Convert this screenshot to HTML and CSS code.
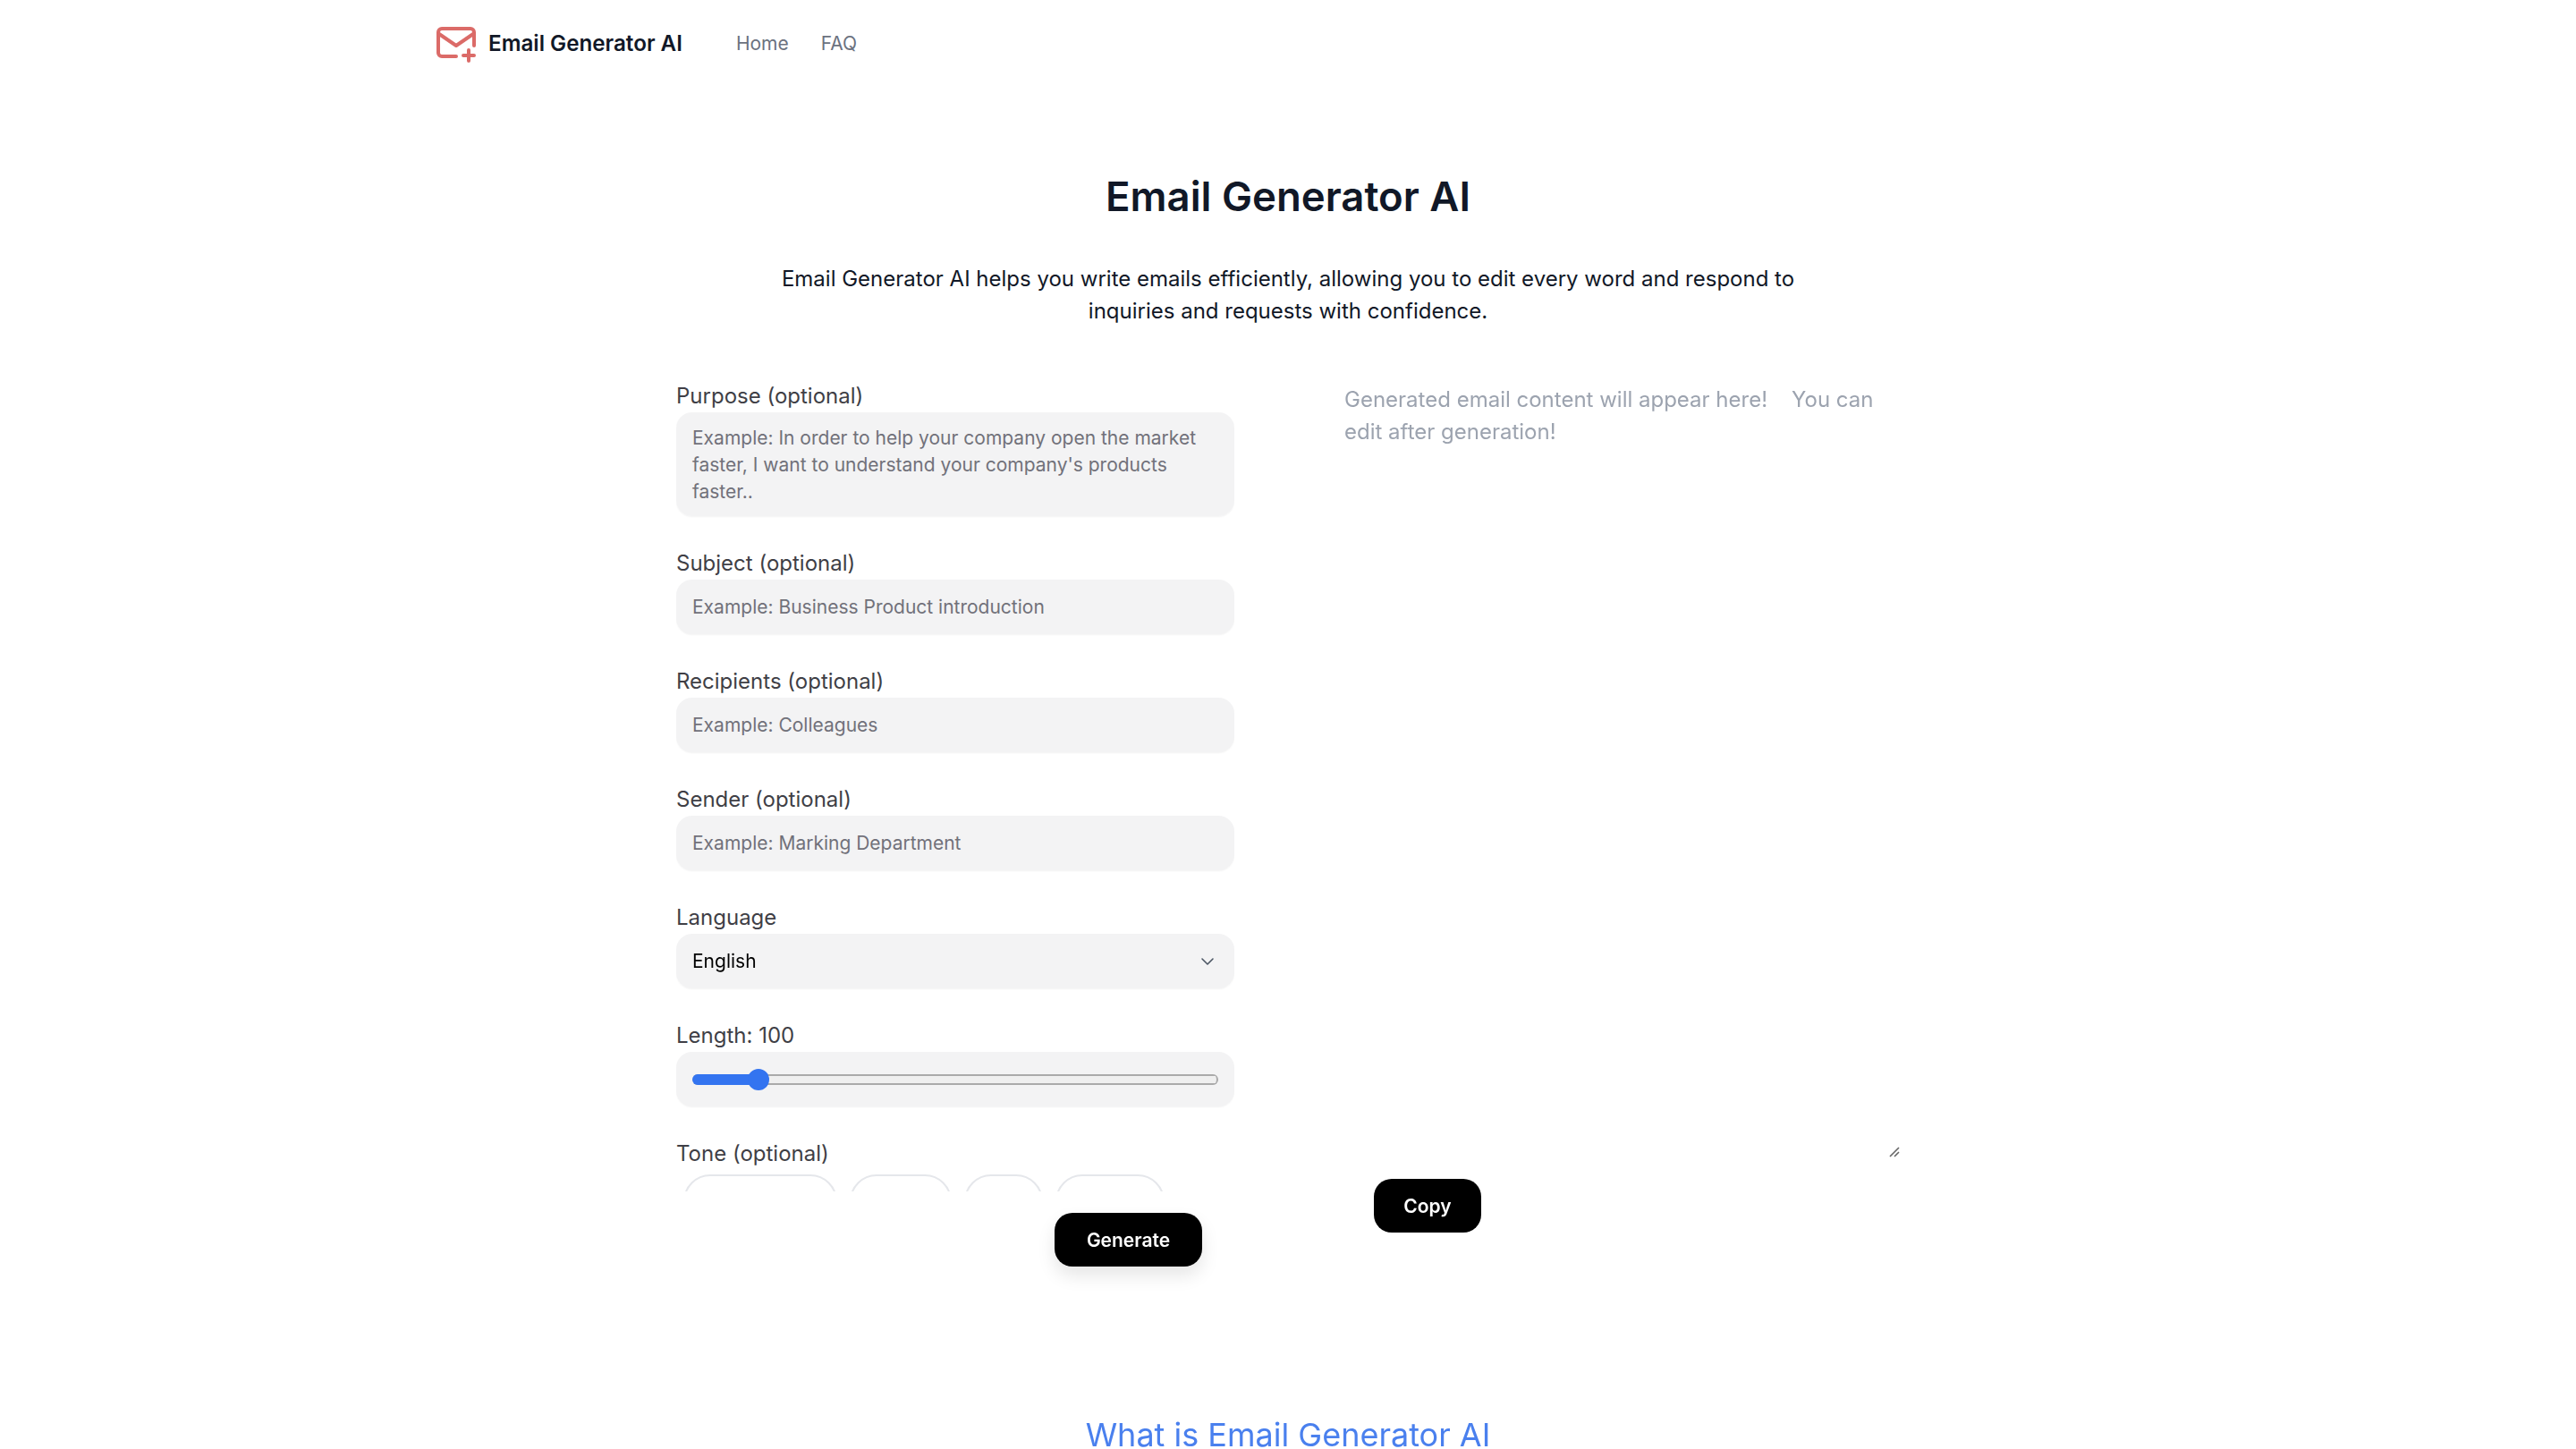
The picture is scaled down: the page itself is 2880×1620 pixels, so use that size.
FILE: index.html
```html
<!DOCTYPE html>
<html lang="en">
<head>
    <meta charset="UTF-8">
    <meta name="viewport" content="width=device-width, initial-scale=1.0">
    <title>Email Generator AI</title>
    <link rel="stylesheet" href="styles.css">
</head>
<body>
    <header class="site-header">
        <a class="logo" href="#">
            <svg class="logo-icon" viewBox="0 0 44 40" fill="none" stroke="#db6b68" stroke-width="4" stroke-linecap="round" stroke-linejoin="round">
                <path d="M22 33H6a4 4 0 0 1-4-4V6a4 4 0 0 1 4-4h32a4 4 0 0 1 4 4v15"/>
                <path d="M3 8l19 13L41 8"/>
                <path d="M36 26v12M30 32h12"/>
            </svg>
            <span>Email Generator AI</span>
        </a>
        <nav class="site-nav">
            <a href="#">Home</a>
            <a href="#">FAQ</a>
        </nav>
    </header>

    <main>
        <h1>Email Generator AI</h1>
        <p class="intro">Email Generator AI helps you write emails efficiently, allowing you to edit every word and respond to inquiries and requests with confidence.</p>

        <div class="tool">
            <div class="tool-left">
                <form class="email-form">
                    <label class="field">
                        <span>Purpose (optional)</span>
                        <textarea class="control control-area" rows="3" placeholder="Example: In order to help your company open the market faster, I want to understand your company's products faster.."></textarea>
                    </label>
                    <label class="field">
                        <span>Subject (optional)</span>
                        <input class="control" type="text" placeholder="Example: Business Product introduction">
                    </label>
                    <label class="field">
                        <span>Recipients (optional)</span>
                        <input class="control" type="text" placeholder="Example: Colleagues">
                    </label>
                    <label class="field">
                        <span>Sender (optional)</span>
                        <input class="control" type="text" placeholder="Example: Marking Department">
                    </label>
                    <label class="field">
                        <span>Language</span>
                        <div class="select-wrap">
                            <select class="control">
                                <option>English</option>
                            </select>
                            <svg class="select-arrow" viewBox="0 0 16 10" fill="none" stroke="#4b5563" stroke-width="1.6" stroke-linecap="round" stroke-linejoin="round">
                                <path d="M2 2l6 6 6-6"/>
                            </svg>
                        </div>
                    </label>
                    <label class="field">
                        <span>Length: 100</span>
                        <div class="control range-wrap">
                            <input class="range" type="range" min="0" max="900" value="100">
                        </div>
                    </label>
                    <div class="field">
                        <span>Tone (optional)</span>
                        <div class="tone-list">
                            <button type="button" class="tone tone-1"></button>
                            <button type="button" class="tone tone-2"></button>
                            <button type="button" class="tone tone-3"></button>
                            <button type="button" class="tone tone-4"></button>
                        </div>
                    </div>
                </form>
                <button type="button" class="btn btn-generate">Generate</button>
            </div>
            <div class="tool-right">
                <div class="output-wrap">
                    <textarea class="output" placeholder="Generated email content will appear here!    You can edit after generation!"></textarea>
                    <svg class="grip" viewBox="0 0 12 12" fill="none" stroke="#666" stroke-width="1.6">
                        <path d="M1 11L11 1M6 11l5-5"/>
                    </svg>
                </div>
                <button type="button" class="btn btn-copy">Copy</button>
            </div>
        </div>

        <h2>What is Email Generator AI</h2>
    </main>
</body>
</html>
```

FILE: styles.css
```css
* {
    box-sizing: border-box;
}
html, body {
    height: 100%;
    overflow: hidden;
}
body {
    margin: 0;
    font-family: Inter, "Noto Sans", sans-serif;
    background-color: #fff;
    color: #111827;
}
a {
    text-decoration: none;
    color: inherit;
}
.site-header {
    display: flex;
    align-items: center;
    width: 1904px;
    height: 96px;
    margin: 0 auto;
}
.logo {
    display: flex;
    align-items: center;
    gap: 14px;
    font-size: 24.2px;
    font-weight: 600;
    color: #111827;
}
.logo-icon {
    width: 44px;
    height: 40px;
    margin-top: 4px;
}
.site-nav {
    display: flex;
    gap: 36px;
    margin-left: 60px;
    font-size: 21px;
    color: #6b7280;
}
h1 {
    margin: 96px 0 0;
    font-size: 45.5px;
    line-height: 56px;
    font-weight: 600;
    text-align: center;
    color: #111827;
}
.intro {
    width: 1160px;
    margin: 46px auto 0;
    font-size: 24px;
    line-height: 36px;
    text-align: center;
    color: #111827;
}
.tool {
    display: flex;
    width: 1368px;
    margin: 59px auto 0;
}
.tool-left {
    width: 729px;
}
.email-form {
    display: flex;
    flex-direction: column;
    gap: 35px;
    width: 624px;
    height: 907px;
    overflow: hidden;
}
.field {
    display: flex;
    flex-direction: column;
    font-size: 24px;
    line-height: 36px;
    color: #3f3f46;
}
.control {
    display: block;
    width: 100%;
    height: 61px;
    padding: 0 18px;
    border: 0;
    border-radius: 18px;
    outline: 0;
    background-color: #f3f3f4;
    box-shadow: 0 1px 2px rgba(0, 0, 0, 0.05);
    font-family: inherit;
    font-size: 21px;
    color: #000;
}
.control::placeholder {
    color: #71717a;
    opacity: 1;
}
.control-area {
    height: 116px;
    padding: 14px 18px;
    line-height: 30px;
    resize: none;
}
.select-wrap {
    position: relative;
}
.select-wrap select {
    appearance: none;
}
.select-arrow {
    position: absolute;
    top: 26px;
    right: 22px;
    width: 16px;
    height: 10px;
}
.range-wrap {
    display: flex;
    align-items: center;
}
.range {
    width: 100%;
    height: 32px;
    margin: 0;
    appearance: none;
    background: transparent;
}
.range::-webkit-slider-runnable-track {
    height: 12px;
    border-right: 2px solid #aaa;
    border-radius: 6px;
    background:
        linear-gradient(#3374f0, #3374f0) 0 0 / 12.8% 100% no-repeat,
        linear-gradient(to bottom, #aaa 2px, #efefef 2px, #efefef 10px, #aaa 10px);
}
.range::-webkit-slider-thumb {
    appearance: none;
    width: 24px;
    height: 24px;
    margin-top: -6px;
    border-radius: 50%;
    background-color: #3374f0;
}
.tone-list {
    display: flex;
    gap: 14px;
    margin-top: 5px;
    padding-left: 8px;
}
.tone {
    height: 60px;
    padding: 0;
    border: 2px solid #e5e7eb;
    border-radius: 32px;
    background: #fff;
}
.tone-1 {
    width: 172px;
}
.tone-2 {
    width: 114px;
}
.tone-3 {
    width: 88px;
}
.tone-4 {
    width: 122px;
}
.btn {
    display: block;
    border: 0;
    border-radius: 20px;
    background-color: #000;
    color: #fff;
    font-family: inherit;
    font-size: 21px;
    font-weight: 600;
    height: 60px;
}
.btn-generate {
    width: 165px;
    margin: 24px 0 0 423px;
    box-shadow: 0 10px 20px rgba(0, 0, 0, 0.1);
}
.tool-right {
    width: 639px;
}
.output-wrap {
    position: relative;
}
.output {
    display: block;
    width: 100%;
    height: 870px;
    padding: 4px 18px;
    border: 0;
    outline: 0;
    resize: none;
    font-family: inherit;
    font-size: 24px;
    line-height: 36px;
    color: #111827;
}
.output::placeholder {
    color: #9ca3af;
}
.grip {
    position: absolute;
    right: 0;
    bottom: 1px;
    width: 12px;
    height: 12px;
}
.btn-copy {
    width: 120px;
    margin: 23px 0 0 51px;
}
h2 {
    margin: 172px 0 0;
    font-size: 36px;
    line-height: 32px;
    font-weight: 400;
    text-align: center;
    color: #4a80ee;
}
```
